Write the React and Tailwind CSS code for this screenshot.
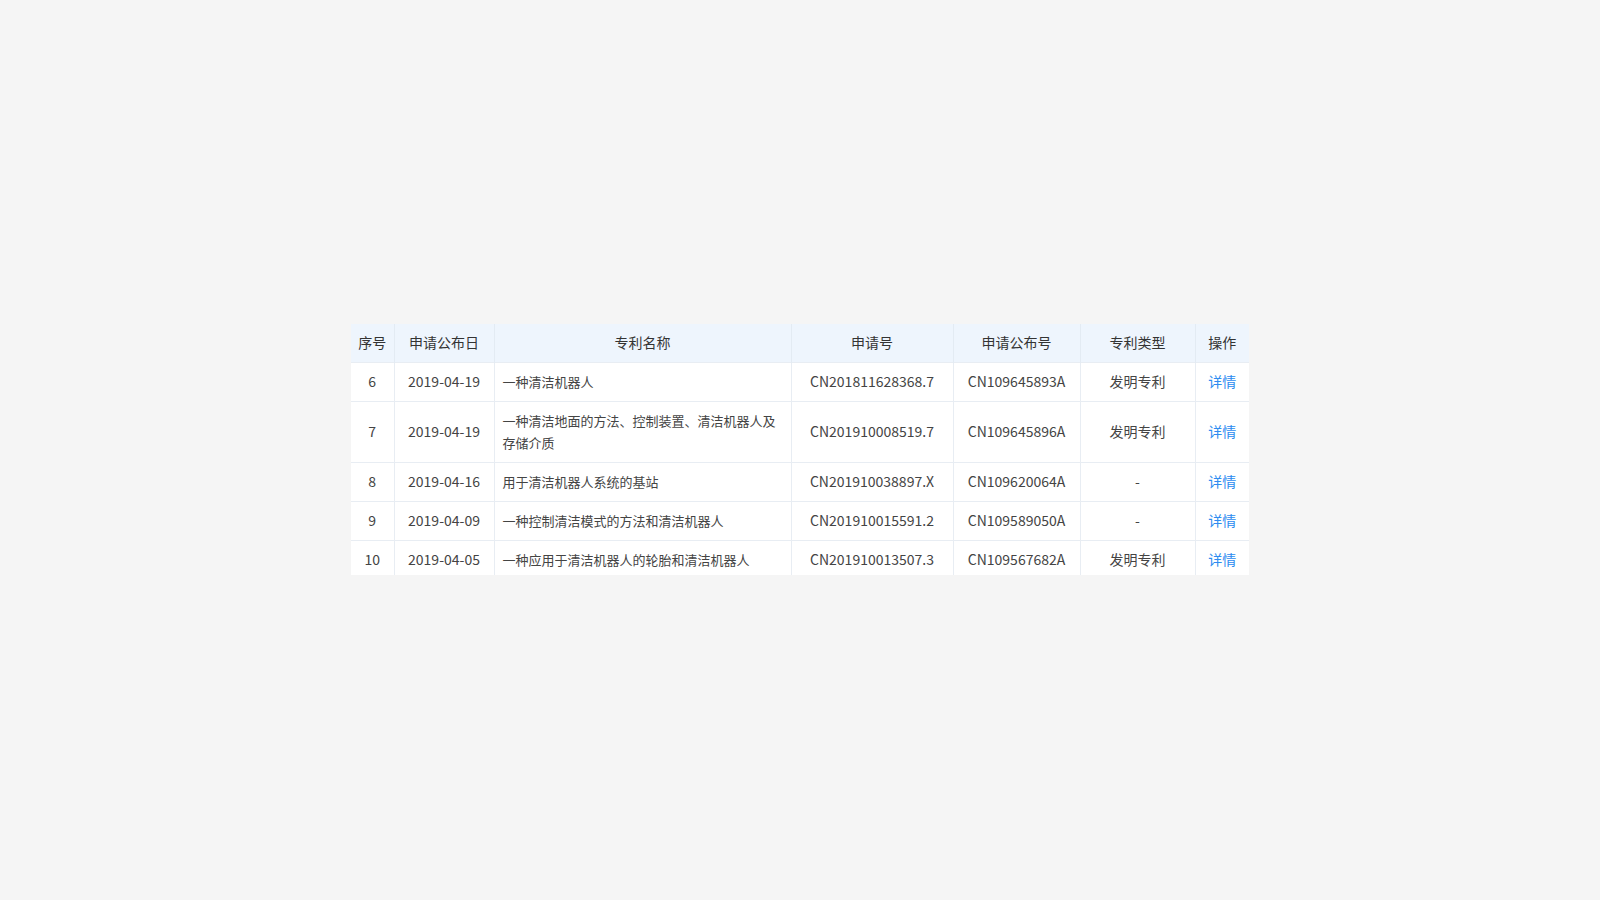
const rows = [
  ['6', '2019-04-19', '一种清洁机器人', 'CN201811628368.7', 'CN109645893A', '发明专利'],
  ['7', '2019-04-19', '一种清洁地面的方法、控制装置、清洁机器人及存储介质', 'CN201910008519.7', 'CN109645896A', '发明专利'],
  ['8', '2019-04-16', '用于清洁机器人系统的基站', 'CN201910038897.X', 'CN109620064A', '-'],
  ['9', '2019-04-09', '一种控制清洁模式的方法和清洁机器人', 'CN201910015591.2', 'CN109589050A', '-'],
  ['10', '2019-04-05', '一种应用于清洁机器人的轮胎和清洁机器人', 'CN201910013507.3', 'CN109567682A', '发明专利'],
]

const cols = ['w-[43px]', 'w-[100px]', 'w-[297px]', 'w-[162px]', 'w-[127px]', 'w-[115px]', 'w-[54px]']
const heads = ['序号', '申请公布日', '专利名称', '申请号', '申请公布号', '专利类型', '操作']

export default function App() {
  return (
    <div className="min-h-screen bg-[#f5f5f5] pt-[324px] pl-[351px] text-[14px] text-[#444]" style={{ fontFamily: '"Microsoft YaHei", "Noto Sans CJK SC", sans-serif' }}>
      <div className="h-[251px] w-[898px] overflow-hidden bg-white">
        <table className="w-[898px] table-fixed border-collapse">
          <colgroup>
            {cols.map((c, i) => <col key={i} className={c} />)}
          </colgroup>
          <thead>
            <tr className="h-[38px] bg-[#eef5fd]">
              {heads.map((h, i) => (
                <th key={i} className="border-r border-[#e3ebf3] text-center font-normal text-[#333] last:border-r-0">{h}</th>
              ))}
            </tr>
          </thead>
          <tbody>
            {rows.map((r) => (
              <tr key={r[0]} className={`border-t border-[#e8edf3] ${r[0] === '7' ? 'h-[61px]' : 'h-[39px]'}`}>
                <td className="border-r border-[#e8edf3] text-center">{r[0]}</td>
                <td className="border-r border-[#e8edf3] text-center">{r[1]}</td>
                <td className="border-r border-[#e8edf3] px-2 text-left text-[13px] leading-[22px]">{r[2]}</td>
                <td className="border-r border-[#e8edf3] text-center">{r[3]}</td>
                <td className="border-r border-[#e8edf3] text-center">{r[4]}</td>
                <td className="border-r border-[#e8edf3] text-center">{r[5]}</td>
                <td className="text-center text-[#2d8cf0]">详情</td>
              </tr>
            ))}
          </tbody>
        </table>
      </div>
    </div>
  )
}
